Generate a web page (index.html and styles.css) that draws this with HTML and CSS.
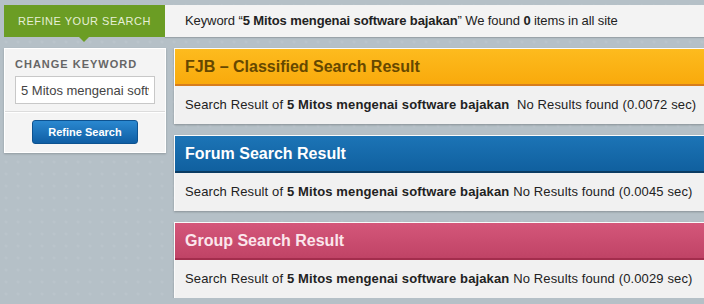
FILE: index.html
```html
<!DOCTYPE html>
<html lang="en">
<head>
    <meta charset="UTF-8">
    <title>Search Result</title>
    <link rel="stylesheet" href="styles.css">
</head>
<body>
    <div class="page">
        <div class="top-row">
            <div class="refine-tab">REFINE YOUR SEARCH</div>
            <div class="keyword-bar">Keyword &ldquo;<b>5 Mitos mengenai software bajakan</b>&rdquo; We found <b>0</b> items in all site</div>
        </div>

        <div class="content">
            <div class="sidebar">
                <div class="side-box">
                    <div class="side-title">CHANGE KEYWORD</div>
                    <input class="keyword-input" type="text" value="5 Mitos mengenai software bajakan">
                </div>
                <div class="side-foot">
                    <button class="refine-btn">Refine Search</button>
                </div>
            </div>

            <div class="results">
                <div class="result fjb">
                    <div class="result-head">FJB &ndash; Classified Search Result</div>
                    <div class="result-body">Search Result of <b>5 Mitos mengenai software bajakan</b>&nbsp; No Results found (0.0072 sec)</div>
                </div>
                <div class="result forum">
                    <div class="result-head">Forum Search Result</div>
                    <div class="result-body">Search Result of <b>5 Mitos mengenai software bajakan</b> No Results found (0.0045 sec)</div>
                </div>
                <div class="result group">
                    <div class="result-head">Group Search Result</div>
                    <div class="result-body">Search Result of <b>5 Mitos mengenai software bajakan</b> No Results found (0.0029 sec)</div>
                </div>
            </div>
        </div>
    </div>
</body>
</html>
```

FILE: styles.css
```css
* {
    box-sizing: border-box;
    margin: 0;
    padding: 0;
}

body {
    font-family: "Liberation Sans", Arial, sans-serif;
    background-color: #b5c0c7;
    background-image: radial-gradient(rgba(255, 255, 255, 0.07) 1px, transparent 2px);
    background-size: 12px 12px;
    color: #222;
    overflow: hidden;
}

.page {
    padding: 5px 0 0 4px;
}

.top-row {
    display: flex;
    height: 32px;
}

.refine-tab {
    position: relative;
    flex-shrink: 0;
    width: 161px;
    background: #6b9d24;
    color: #e6efd6;
    font-size: 11px;
    letter-spacing: 0.5px;
    line-height: 32px;
    text-align: center;
}

.refine-tab::after {
    content: "";
    position: absolute;
    left: 75px;
    bottom: -5px;
    border-left: 5px solid transparent;
    border-right: 5px solid transparent;
    border-top: 5px solid #6b9d24;
}

.keyword-bar {
    flex: 1;
    min-width: 0;
    background: #f3f3f3;
    font-size: 13px;
    letter-spacing: -0.1px;
    line-height: 32px;
    padding-left: 20px;
    white-space: nowrap;
    box-shadow: 0 1px 1px rgba(0, 0, 0, 0.15);
}

.content {
    display: flex;
    gap: 8px;
    margin-top: 11px;
}

.sidebar {
    width: 162px;
    flex-shrink: 0;
    align-self: flex-start;
    background: #f4f4f4;
    border: 1px solid #fff;
    box-shadow: 0 1px 2px rgba(0, 0, 0, 0.2);
}

.side-box {
    padding: 9px 10px 7px;
    border-bottom: 1px solid #dcdcdc;
}

.side-title {
    font-size: 11px;
    font-weight: bold;
    color: #666;
    letter-spacing: 1px;
    margin-bottom: 6px;
}

.keyword-input {
    width: 140px;
    height: 28px;
    border: 1px solid #c8c8c8;
    background: #fff;
    font-family: inherit;
    font-size: 13px;
    color: #444;
    padding: 0 5px;
    outline: none;
}

.side-foot {
    padding: 7px 0 8px 27px;
    border-top: 1px solid #fff;
}

.refine-btn {
    width: 106px;
    height: 24px;
    border: 1px solid #0d5290;
    border-radius: 3px;
    background: linear-gradient(#2a88d0, #0f5ea4);
    color: #fff;
    font-family: inherit;
    font-size: 11px;
    font-weight: bold;
}

.results {
    flex: 1;
    min-width: 0;
    display: flex;
    flex-direction: column;
    gap: 11px;
}

.result {
    background: #f1f1f1;
    border-top: 1px solid #fafafa;
    border-left: 1px solid #fafafa;
    box-shadow: 0 1px 2px rgba(0, 0, 0, 0.25);
}

.result-head {
    height: 37px;
    padding-left: 10px;
    font-size: 16px;
    font-weight: bold;
    line-height: 35px;
    border-bottom: 2px solid;
}

.result-body {
    height: 38px;
    padding-left: 10px;
    font-size: 13px;
    letter-spacing: 0.13px;
    line-height: 38px;
    white-space: nowrap;
}

.fjb .result-head {
    background: linear-gradient(#fdbb1e, #f9aa0c);
    color: #664800;
    border-bottom-color: #d77d1d;
}

.forum .result-head {
    background: linear-gradient(#1c74b6, #10609f);
    color: #fff;
    border-bottom-color: #0b3c63;
}

.group .result-head {
    background: linear-gradient(#d4577a, #c04366);
    color: #fbe6ec;
    border-bottom-color: #a32d4d;
}
```
